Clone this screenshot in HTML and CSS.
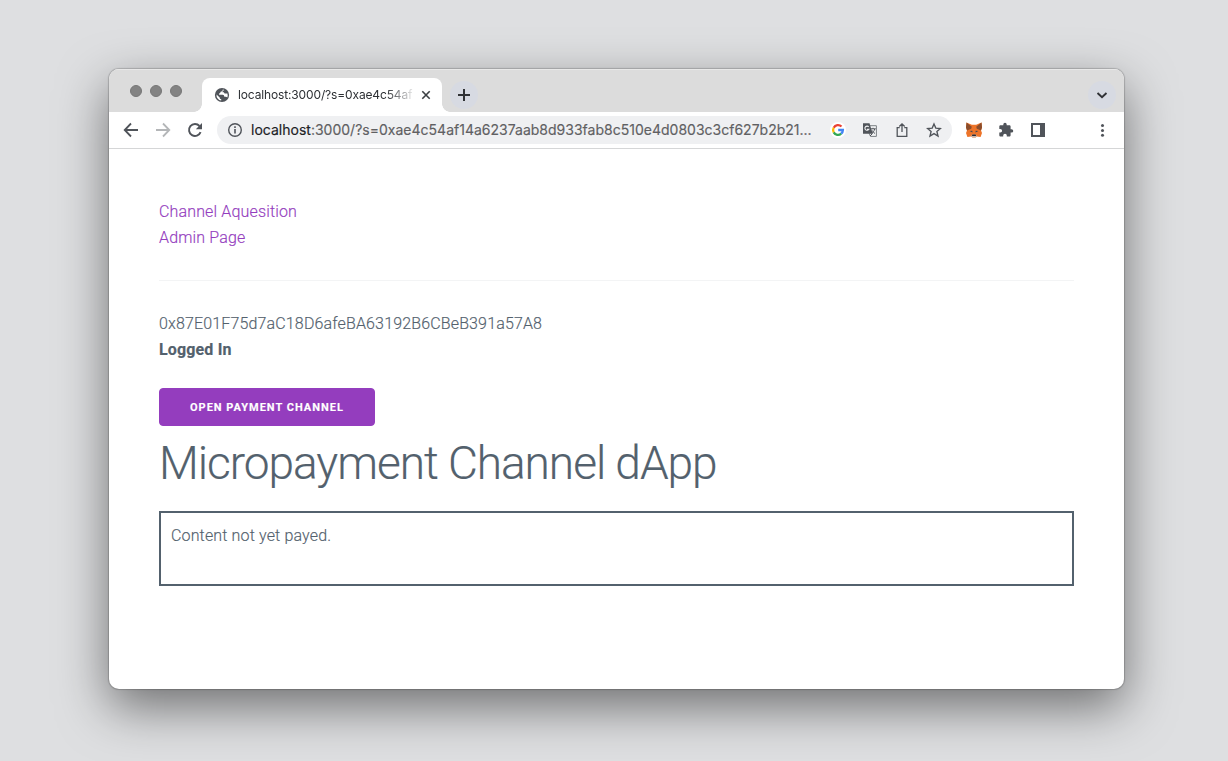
FILE: index.html
```html
<!DOCTYPE html>
<html lang="en">
<head>
<meta charset="utf-8">
<title>Micropayment Channel dApp</title>
<link rel="stylesheet" href="styles.css">
</head>
<body>
<div class="window">
  <div class="tabstrip">
    <div class="lights"><i></i><i></i><i></i></div>
    <div class="tab">
      <svg class="globe" width="16" height="16" viewBox="0 0 16 16"><circle cx="8" cy="8" r="7.100" fill="#50545a"/><path d="M8.800 2.500C8.700 4 8 4.600 6.600 4.700c-.3 1.300-.7 1.500-1.500 1.700v1.300h3.500c1.200.1 1.700.9 1.700 2h1.500c.7 0 1.200.3 1.400.8A5.600 5.600 0 0 0 13.400 6.500h-1.900c-1 0-1.500-.5-1.500-1.300H8.600c-.2-1 .3-1.700 1.800-2.200ZM2.500 7.500A5.500 5.500 0 0 0 7.200 13.500v-1.400c-1 0-1.500-.6-1.500-1.600Z" fill="#fff"/></svg>
      <span class="tab-title">localhost:3000/?s=0xae4c54af</span>
      <svg class="close" width="10" height="10" viewBox="0 0 10 10"><path d="m1.300 1.300 7.400 7.400m0-7.400-7.400 7.400" stroke="#3c4043" stroke-width="1.600"/></svg>
    </div>
    <div class="round"><svg width="14" height="14" viewBox="0 0 14 14"><path d="M7 1v12M1 7h12" stroke="#303236" stroke-width="2"/></svg></div>
    <div class="round menu"><svg width="12" height="12" viewBox="0 0 12 12"><path d="m1.500 4 4.500 4.300L10.500 4" fill="none" stroke="#303236" stroke-width="1.900"/></svg></div>
  </div>
  <div class="toolbar">
    <svg class="nav" width="16" height="16" viewBox="0 0 16 16"><path d="M15 8H2.200M8 1.500 1.700 8 8 14.500" fill="none" stroke="#50545a" stroke-width="1.800"/></svg>
    <svg class="nav" width="16" height="16" viewBox="0 0 16 16"><path d="M1 8h12.800M8 1.500 14.300 8 8 14.500" fill="none" stroke="#b4b6b8" stroke-width="1.800"/></svg>
    <svg class="nav" width="16" height="16" viewBox="0 0 16 16"><path d="M13.600 10.200A6 6 0 1 1 12.500 4" fill="none" stroke="#50545a" stroke-width="1.900"/><path d="M15 1v6.200H8.800Z" fill="#50545a"/></svg>
    <div class="address">
      <svg width="16" height="16" viewBox="0 0 16 16"><circle cx="8" cy="8" r="6.300" fill="none" stroke="#50545a" stroke-width="1.400"/><path d="M8 7v4.500M8 4.300v1.600" stroke="#50545a" stroke-width="1.600"/></svg>
      <span class="url"><b>localhost</b>:3000/?s=0xae4c54af14a6237aab8d933fab8c510e4d0803c3cf627b2b21...</span>
      <div class="actions">
        <svg width="16" height="16" viewBox="0 0 16 16"><circle cx="8" cy="8" r="8" fill="#fff"/><g fill="none" stroke-width="2.300"><path d="M11.500 4.500A4.900 4.900 0 0 0 3.700 5.700" stroke="#ea4335"/><path d="M3.700 5.700a4.900 4.900 0 0 0 0 4.700" stroke="#fbbc05"/><path d="M3.700 10.400a4.900 4.900 0 0 0 7.500 1.300" stroke="#34a853"/><path d="M11.200 11.700A5 5 0 0 0 12.900 8H8.200" stroke="#4285f4"/></g></svg>
        <svg width="16" height="16" viewBox="0 0 16 16"><path d="M6.500 3.700h7.900v10.700H8.500L7 11" fill="#f2f3f4" stroke="#7c8084"/><path d="M1 1.300h6.500l3.200 10.500H1Z" fill="#50545a"/><path d="M6.700 4.900a2.100 2.100 0 1 0 .2 2.300H5" fill="none" stroke="#eff0f2" stroke-width="1.100"/><path d="M8.800 6.800h5M11 5.800v1M12.700 7c-.4 2-1.800 3.500-3 4.200M10 8.300c.8 1.600 1.700 2.400 3 3.100M8 14l2.500-2.500" fill="none" stroke="#50545a"/></svg>
        <svg width="16" height="16" viewBox="0 0 16 16"><path d="M5.700 5.700H3.200v8.600h9.600V5.700h-2.500M8 10V2M5.300 4.500 8 1.800l2.700 2.700" fill="none" stroke="#50545a" stroke-width="1.300"/></svg>
        <svg width="16" height="16" viewBox="0 0 16 16"><path d="m8 1.900 1.800 4.200 4.600.4-3.500 3 1.100 4.500-4-2.400L4 14l1.100-4.500-3.500-3 4.600-.4Z" fill="none" stroke="#50545a" stroke-width="1.350"/></svg>
      </div>
    </div>
    <div class="extensions">
      <svg width="18" height="16" viewBox="0 0 18 16"><path d="m1.500.5 5.300 2.300h4.400L16.500.5l.5 5-1 3 1 2.500-1.400 4-3.600-.5-1.500 1h-3L6 14.500l-3.600.5L1 11l1-2.500-1-3Z" fill="#ed7429"/><path d="m1.500.5 5.300 4.300-.6 2L2 8.500l-1-3Zm15 0-5.300 4.300.6 2L16 8.500l1-3Z" fill="#8b4d2b"/><path d="m4.600 9 2.700-.3.200 1.700Zm8.800 0-2.700-.3-.2 1.700Z" fill="#374554"/><path d="m6 14.500 1.200-2h3.600l1.200 2-1.500 1h-3Z" fill="#c9b9ad"/><path d="M7.300 12.400h3.400l.4 1.600H6.900Z" fill="#2b2930"/></svg>
      <svg width="16" height="16" viewBox="0 0 16 16"><path d="M13.600 7.300h-1V4.600c0-.8-.6-1.300-1.300-1.300H8.700V2.400a1.700 1.700 0 0 0-3.400 0v.9H2.600c-.7 0-1.300.5-1.300 1.300V7h1a1.800 1.800 0 0 1 0 3.600h-1v2.700c0 .7.600 1.300 1.300 1.300h2.600v-1a1.800 1.800 0 0 1 3.600 0v1h2.500c.7 0 1.300-.6 1.300-1.300v-2.700h1a1.650 1.650 0 0 0 0-3.300Z" fill="#50545a"/></svg>
      <svg width="16" height="16" viewBox="0 0 16 16"><path d="M1 1h14v14H1ZM3 3v10h7V3Z" fill="#50545a" fill-rule="evenodd"/></svg>
    </div>
    <svg class="more" width="16" height="16" viewBox="0 0 16 16" fill="#50545a"><circle cx="8.500" cy="3.500" r="1.500"/><circle cx="8.500" cy="8.500" r="1.500"/><circle cx="8.500" cy="13.300" r="1.500"/></svg>
  </div>
  <main class="page">
    <a class="link">Channel Aquesition</a>
    <a class="link">Admin Page</a>
    <hr class="divider">
    <div>0x87E01F75d7aC18D6afeBA63192B6CBeB391a57A8</div>
    <div class="status">Logged In</div>
    <button class="button">Open Payment Channel</button>
    <h1 class="title">Micropayment Channel dApp</h1>
    <section class="content"><p>Content not yet payed.</p></section>
  </main>
</div>
</body>
</html>
```
FILE: styles.css
```css
* { box-sizing: border-box; }
body {
  margin: 0;
  height: 761px;
  padding: 69px 104px 72px 109px;
  overflow: hidden;
  background: #dedfe1;
}
svg { display: block; flex: none; }
.window {
  height: 620px;
  border-radius: 10px;
  overflow: hidden;
  background: #fff;
  box-shadow: 0 0 1px 1px rgba(0, 0, 0, .18), 0 18px 50px rgba(0, 0, 0, .5);
}
.tabstrip {
  display: flex;
  height: 43px;
  background: #dcdcdc;
  box-shadow: inset 0 1px #e8e8e8;
}
.lights { display: flex; gap: 8px; padding: 16px 0 0 21px; width: 93px; }
.lights i { width: 12px; height: 12px; border-radius: 50%; background: #838383; border: 1px solid #777; }
.tab {
  position: relative;
  display: flex;
  align-items: center;
  width: 240px;
  height: 34px;
  margin-top: 9px;
  padding-left: 12px;
  border-radius: 8px 8px 0 0;
  background: #fff;
}
.tab::before, .tab::after {
  content: "";
  position: absolute;
  bottom: 0;
  width: 8px;
  height: 8px;
}
.tab::before { left: -8px; background: radial-gradient(circle at 0 0, transparent 7.5px, #fff 8px); }
.tab::after { right: -8px; background: radial-gradient(circle at 100% 0, transparent 7.5px, #fff 8px); }
.tab-title {
  width: 176px;
  margin-left: 8px;
  white-space: nowrap;
  font: 12px/16px Inter, sans-serif;
  letter-spacing: -.14px;
  color: #2c2f33;
  -webkit-mask-image: linear-gradient(90deg, #000 148px, transparent 178px);
  mask-image: linear-gradient(90deg, #000 148px, transparent 178px);
}
.close { margin-left: 7px; }
.round {
  display: flex;
  align-items: center;
  justify-content: center;
  width: 28px;
  height: 28px;
  margin: 12px 0 0 8px;
  border-radius: 50%;
  background: #d7dae2;
}
.menu { margin-left: auto; margin-right: 8px; }
.toolbar {
  display: flex;
  align-items: center;
  height: 37px;
  padding-left: 14px;
  border-bottom: 1px solid #d5d6d7;
}
.nav { margin-right: 16px; }
.address {
  display: flex;
  align-items: center;
  width: 735px;
  height: 28px;
  margin-left: -2px;
  padding: 0 10px;
  border-radius: 14px;
  background: #eff0f2;
}
.url {
  margin-left: 8px;
  white-space: nowrap;
  font: 14px/20px Inter, sans-serif;
  letter-spacing: .008px;
  color: #5f6062;
  -webkit-text-stroke: .15px;
}
.url b { font-weight: 400; color: #202124; }
.actions { display: flex; gap: 16px; margin-left: auto; }
.extensions { display: flex; gap: 16px; margin-left: 13px; }
.extensions svg:first-child { margin-right: -1px; }
.more { margin-left: auto; margin-right: 14px; }
.page {
  padding: 50px;
  font: 300 16px/25.6px Roboto, sans-serif;
  letter-spacing: .15px;
  color: #53616d;
  -webkit-text-stroke: .15px;
}
.link { display: block; color: #943dbe; }
.divider { margin: 30px 0; border: 0; border-top: 1px solid #f3f4f5; }
.status { font-weight: 700; margin-bottom: 25.6px; }
.button {
  display: block;
  height: 38px;
  margin: 0 0 10px;
  padding: 1px 30px 0;
  border: 1px solid #943dbe;
  border-radius: 4px;
  background: #943dbe;
  color: #fff;
  font: 700 11px/36px Roboto, sans-serif;
  letter-spacing: 1px;
  text-transform: uppercase;
}
.title { margin: 0 0 19.4px; font-size: 46px; font-weight: 300; line-height: 55.2px; letter-spacing: -1.03px; }
.content { height: 75px; padding: 10px; border: 2px solid #53616d; }
.content p { margin: 0; }
```
